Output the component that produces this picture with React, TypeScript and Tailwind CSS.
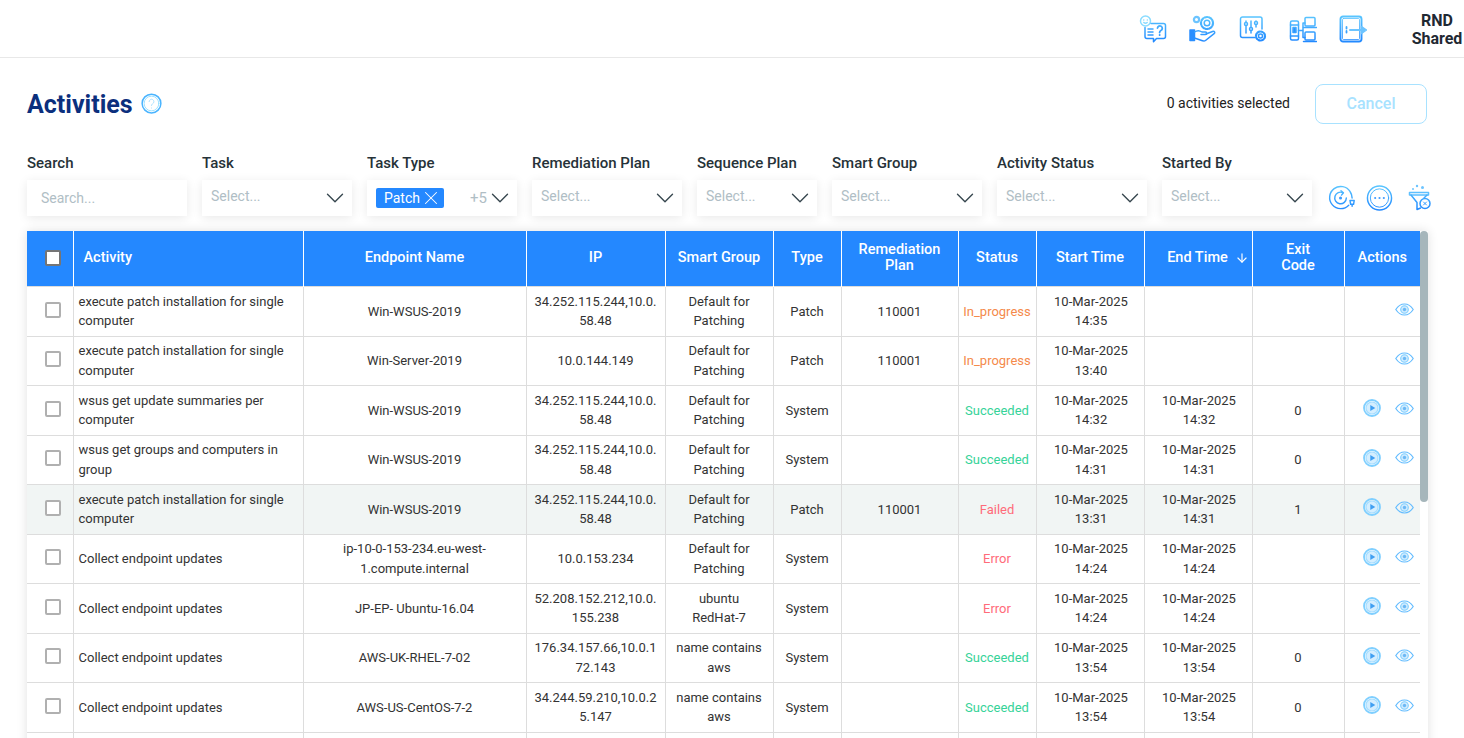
import { ArrowDown, ChevronDown, X } from "lucide-react";
import type { ReactNode } from "react";

const filters = [
  { label: "Task", width: "w-[150px]" },
  { label: "Task Type", width: "w-[150px]", tag: "Patch" },
  { label: "Remediation Plan", width: "w-[150px]" },
  { label: "Sequence Plan", width: "w-[120px]" },
  { label: "Smart Group", width: "w-[150px]" },
  { label: "Activity Status", width: "w-[150px]" },
  { label: "Started By", width: "w-[150px]" },
];

const columns = [
  { label: "", width: "w-[46px]" },
  { label: "Activity", width: "w-[230px]" },
  { label: "Endpoint Name", width: "w-[223px]" },
  { label: "IP", width: "w-[139px]" },
  { label: "Smart Group", width: "w-[108px]" },
  { label: "Type", width: "w-[68px]" },
  { label: "Remediation\nPlan", width: "w-[117px]" },
  { label: "Status", width: "w-[78px]" },
  { label: "Start Time", width: "w-[108px]" },
  { label: "End Time", width: "w-[108px]" },
  { label: "Exit\nCode", width: "w-[92px]" },
  { label: "Actions", width: "w-[76px]" },
];

const patchName = "execute patch installation for single computer";
const collect = "Collect endpoint updates";
const wsusIp = "34.252.115.244,10.0.58.48";
const patching = "Default for Patching";

const rows = [
  { activity: patchName, endpoint: "Win-WSUS-2019", ip: wsusIp, group: patching, type: "Patch", plan: "110001", status: "In_progress", start: ["10-Mar-2025", "14:35"], end: [], code: "" },
  { activity: patchName, endpoint: "Win-Server-2019", ip: "10.0.144.149", group: patching, type: "Patch", plan: "110001", status: "In_progress", start: ["10-Mar-2025", "13:40"], end: [], code: "" },
  { activity: "wsus get update summaries per computer", endpoint: "Win-WSUS-2019", ip: wsusIp, group: patching, type: "System", plan: "", status: "Succeeded", start: ["10-Mar-2025", "14:32"], end: ["10-Mar-2025", "14:32"], code: "0" },
  { activity: "wsus get groups and computers in group", endpoint: "Win-WSUS-2019", ip: wsusIp, group: patching, type: "System", plan: "", status: "Succeeded", start: ["10-Mar-2025", "14:31"], end: ["10-Mar-2025", "14:31"], code: "0" },
  { activity: patchName, endpoint: "Win-WSUS-2019", ip: wsusIp, group: patching, type: "Patch", plan: "110001", status: "Failed", start: ["10-Mar-2025", "13:31"], end: ["10-Mar-2025", "14:31"], code: "1", hover: true },
  { activity: collect, endpoint: "ip-10-0-153-234.eu-west-1.compute.internal", ip: "10.0.153.234", group: patching, type: "System", plan: "", status: "Error", start: ["10-Mar-2025", "14:24"], end: ["10-Mar-2025", "14:24"], code: "" },
  { activity: collect, endpoint: "JP-EP- Ubuntu-16.04", ip: "52.208.152.212,10.0.155.238", group: "ubuntu RedHat-7", type: "System", plan: "", status: "Error", start: ["10-Mar-2025", "14:24"], end: ["10-Mar-2025", "14:24"], code: "" },
  { activity: collect, endpoint: "AWS-UK-RHEL-7-02", ip: "176.34.157.66,10.0.172.143", group: "name contains aws", type: "System", plan: "", status: "Succeeded", start: ["10-Mar-2025", "13:54"], end: ["10-Mar-2025", "13:54"], code: "0" },
  { activity: collect, endpoint: "AWS-US-CentOS-7-2", ip: "34.244.59.210,10.0.25.147", group: "name contains aws", type: "System", plan: "", status: "Succeeded", start: ["10-Mar-2025", "13:54"], end: ["10-Mar-2025", "13:54"], code: "0" },
];

const statusColors: Record<string, string> = {
  In_progress: "text-[#f58a4b]",
  Succeeded: "text-[#36d399]",
  Failed: "text-[#ff6b7a]",
  Error: "text-[#ff6b7a]",
};

function Icon({ size, children }: { size: number; children: ReactNode }) {
  return (
    <svg
      width={size}
      height={size}
      viewBox="0 0 28 28"
      fill="none"
      stroke="url(#iconBlue)"
      strokeWidth="1.5"
      strokeLinecap="round"
      strokeLinejoin="round"
    >
      {children}
    </svg>
  );
}

function ChatIcon() {
  return (
    <Icon size={28}>
      <circle cx="6.5" cy="6" r="5" stroke="#8adcff" />
      <path d="M4.7 5h.1M8.3 5h.1M4.8 7.500c1 .8 2.400 .8 3.400 0" stroke="#8adcff" />
      <path d="M12 8.500h12.500a2 2 0 0 1 2 2v11a2 2 0 0 1-2 2h-7l-3 3.200v-3.200H8a2 2 0 0 1-2-2v-9" />
      <path d="M9 14h5M9 17h5M9 20h5" />
      <path d="M18.500 13a2.400 2.400 0 1 1 3.400 2.500c-.9 .5-1.300 1-1.300 2M20.600 20h.1" strokeWidth="1.800" />
    </Icon>
  );
}

function HandGearIcon() {
  return (
    <Icon size={28}>
      <circle cx="7.500" cy="4.500" r="2.600" stroke="#6cc4ff" strokeWidth="2.200" />
      <circle cx="18" cy="8" r="2.800" />
      <circle cx="18" cy="8" r="6" strokeDasharray="2.600 1.600" strokeWidth="2.200" />
      <path d="M1 15h4.500v10.500H1z" fill="#2a8fff" stroke="#2a8fff" />
      <path d="M5.500 17c2.500-1.800 5-1.800 7.500 0h3.500c1.600 0 1.600 2.500 0 2.500H12" />
      <path d="M17 19l6.500-2.500c2-.6 3 1 1.600 2.200L16.500 25.500c-1 .7-2 .7-3 .2L5.500 23" />
    </Icon>
  );
}

function SlidersIcon() {
  return (
    <Icon size={28}>
      <path d="M16 22.500H3.500a2 2 0 0 1-2-2V4a2 2 0 0 1 2-2h17.500a2 2 0 0 1 2 2v10" />
      <path d="M7 6v12M12 6v12M17 6v6" />
      <circle cx="7" cy="9" r="1.500" fill="#fff" />
      <circle cx="12" cy="14" r="1.500" fill="#fff" />
      <circle cx="17" cy="8" r="1.500" fill="#fff" />
      <circle cx="21.500" cy="21" r="2" />
      <circle cx="21.500" cy="21" r="4.500" strokeDasharray="2 1.500" strokeWidth="2.200" />
    </Icon>
  );
}

function DevicesIcon() {
  return (
    <Icon size={28}>
      <rect x="1.500" y="6" width="8" height="19" rx="1.500" />
      <path d="M1.500 10h8M1.500 21h8" />
      <rect x="4" y="12.500" width="3" height="5" fill="#2a8fff" />
      <path d="M9.500 15.500h4.500M14 8v14.500M14 8h2M14 22.500h2" />
      <rect x="16" y="2.500" width="10" height="8.500" rx="1" />
      <path d="M14.500 12.500h13" />
      <rect x="16" y="17" width="10" height="8" rx="1" />
      <path d="M14.500 26.500h13" />
    </Icon>
  );
}

function DoorIcon() {
  return (
    <Icon size={28}>
      <rect x="1.500" y="1.500" width="21" height="25" rx="2.500" strokeWidth="1.900" />
      <rect x="3.500" y="3.500" width="17" height="21" rx="1" strokeWidth="0.800" />
      <path d="M7.500 12v1.500M7.500 16v1.500" strokeWidth="1.800" />
      <path d="M11 15h12" stroke="#6cc4ff" strokeWidth="2" />
      <path d="M22.500 11.500L27.500 15l-5 3.500z" fill="#6cc4ff" stroke="#6cc4ff" />
    </Icon>
  );
}

function RefreshIcon() {
  return (
    <Icon size={28}>
      <path d="M21.500 21.500A11.500 11.500 0 1 1 23 7.500 12 12 0 0 1 25 14" />
      <path d="M19 14a6 6 0 1 1-3.500-5.500" />
      <path d="M13.500 6.500l2.500 2-2 2.500" />
      <circle cx="13" cy="14" r="1.600" fill="#3b9bff" stroke="none" />
      <path d="M22.800 16.500h4.400l-.7 4h-3zM25 20.500v2" />
    </Icon>
  );
}

function DotsIcon() {
  return (
    <Icon size={28}>
      <circle cx="14" cy="14" r="12.500" />
      <circle cx="14" cy="14" r="9.500" strokeWidth="1" />
      <circle cx="9.500" cy="14" r="1.100" fill="#3b9bff" stroke="none" />
      <circle cx="14" cy="14" r="1.100" fill="#3b9bff" stroke="none" />
      <circle cx="18.500" cy="14" r="1.100" fill="#3b9bff" stroke="none" />
    </Icon>
  );
}

function FunnelIcon() {
  return (
    <Icon size={28}>
      <circle cx="11" cy="2" r="1.200" fill="#6cc4ff" stroke="none" />
      <circle cx="16.500" cy="3.500" r="1.500" fill="#6cc4ff" stroke="none" />
      <circle cx="7" cy="5" r="1" fill="#6cc4ff" stroke="none" />
      <path d="M3.500 8.500h19v2.500h-19z" stroke="#5ec0ff" />
      <path d="M5 11l6 7.500v7l3.500-1.500" />
      <path d="M21 11l-3 3" />
      <circle cx="19" cy="19.500" r="5" />
      <path d="M17.500 18l3 3M20.500 18l-3 3" strokeWidth="1" />
    </Icon>
  );
}

function HelpIcon() {
  return (
    <Icon size={21}>
      <circle cx="14" cy="14" r="12.500" stroke="#4ab4ff" strokeWidth="2" />
      <circle cx="14" cy="14" r="9.800" stroke="#8adcff" strokeWidth="1.100" />
      <path d="M10.800 11.500a3.200 3.200 0 1 1 4.800 2.800c-1 .6-1.600 1.200-1.600 2.400M14 20h.1" stroke="#a8e0ff" strokeWidth="1.300" />
    </Icon>
  );
}

function PlayIcon() {
  return (
    <svg width="18" height="18" viewBox="0 0 18 18" fill="none">
      <circle cx="9" cy="9" r="8" stroke="#7fcfff" strokeWidth="1.800" />
      <circle cx="9" cy="9" r="6" stroke="#a5ddff" strokeWidth="1.200" fill="#d4eeff" />
      <path d="M7.300 6.100L12.300 9l-5 2.900z" fill="#3f9ff2" />
    </svg>
  );
}

function EyeIcon() {
  return (
    <svg width="19" height="13" viewBox="0 0 19 13" fill="none">
      <path d="M.8 6.500C3 3 6 1 9.500 1s6.500 2 8.700 5.500C16 10 13 12 9.500 12S3 10 .8 6.500z" stroke="#63bcff" strokeWidth="1.200" />
      <circle cx="9.500" cy="6.500" r="3.800" stroke="#7fcfff" strokeWidth="1.100" fill="#cdeaff" />
      <circle cx="9.500" cy="6.500" r="1.700" fill="#6db9f5" />
    </svg>
  );
}

function Filter({ label, width, tag }: { label: string; width: string; tag?: string }) {
  return (
    <div className={`${width} shrink-0`}>
      <div className="text-[15px] leading-[20px] font-medium text-[#263238] mb-[7px]">{label}</div>
      <div className="h-[36px] bg-white shadow-[0_2px_10px_rgba(0,0,0,0.09)] flex items-center pl-[9px] pr-[8px]">
        {tag ? (
          <>
            <span className="h-[20px] bg-[#2488ff] rounded-[2px] text-white text-[14px] leading-[20px] pl-[8px] pr-[2px] flex items-center">
              {tag}
              <X size={22} strokeWidth={1.1} />
            </span>
            <span className="ml-auto text-[15px] text-[#b0bec5]">+5</span>
          </>
        ) : (
          <span className="text-[14px] text-[#b0bec5] -mt-[4px]">Select...</span>
        )}
        <ChevronDown
          size={30}
          strokeWidth={1.1}
          className={`text-[#37474f] shrink-0 -mr-[6px] ${tag ? "-ml-[2px]" : "ml-auto"}`}
        />
      </div>
    </div>
  );
}

function Checkbox({ header }: { header?: boolean }) {
  return (
    <span
      className={
        header
          ? "block w-[16px] h-[16px] ml-[18px] bg-white border-[2px] border-[#757575] rounded-[2px]"
          : "block w-[16px] h-[16px] ml-[18px] -mt-[3px] bg-white border-[2px] border-[#b0b0b0] rounded-[2px]"
      }
    />
  );
}

export default function App() {
  return (
    <div className="h-[738px] overflow-hidden bg-white font-['Roboto',sans-serif] text-[#333]">
      <svg className="absolute w-0 h-0">
        <defs>
          <linearGradient id="iconBlue" gradientUnits="userSpaceOnUse" x1="0" y1="0" x2="0" y2="28">
            <stop offset="0" stopColor="#5cc8ff" />
            <stop offset="1" stopColor="#1f86ff" />
          </linearGradient>
        </defs>
      </svg>

      <header className="h-[58px] border-b border-[#e8e8e8] flex items-center justify-end">
        <div className="flex items-center gap-[22px] mr-[69px]">
          <ChatIcon />
          <HandGearIcon />
          <SlidersIcon />
          <DevicesIcon />
          <DoorIcon />
        </div>
        <div className="w-[2px] text-[16px] leading-[18px] font-bold text-center text-[#1f2933] flex flex-col items-center mr-[26px] mt-[2px] whitespace-nowrap">
          <span>RND</span>
          <span>Shared</span>
        </div>
      </header>

      <div className="pl-[27px] pr-[37px]">
        <div className="flex items-center h-[40px] mt-[26px]">
          <h1 className="text-[25px] leading-[32px] font-bold text-[#0b2f7d] mt-[1px]">Activities</h1>
          <span className="ml-[8px] flex -mt-[1px]">
            <HelpIcon />
          </span>
          <span className="ml-auto text-[14px] text-[#222] -mt-[2px]">0 activities selected</span>
          <button className="ml-[25px] w-[112px] h-[40px] border border-[#a8e2ff] rounded-[8px] text-[16px] font-medium text-[#a8e2ff]">
            Cancel
          </button>
        </div>

        <div className="flex items-end mt-[29px]">
          <div className="w-[160px] shrink-0 mr-[15px]">
            <div className="text-[15px] leading-[20px] font-medium text-[#263238] mb-[7px]">Search</div>
            <div className="h-[36px] bg-white shadow-[0_2px_10px_rgba(0,0,0,0.09)] flex items-center pl-[14px] text-[14px] text-[#b0bec5]">
              Search...
            </div>
          </div>
          <div className="flex gap-[15px]">
            {filters.map((f) => (
              <Filter key={f.label} label={f.label} width={f.width} tag={f.tag} />
            ))}
          </div>
          <div className="flex items-center gap-[11px] ml-[16px] mb-[4px] w-[106px]">
            <RefreshIcon />
            <DotsIcon />
            <span className="ml-[2px] flex">
              <FunnelIcon />
            </span>
          </div>
        </div>

        <div className="flex mt-[15px] w-[1401px] shadow-[0_0_10px_rgba(0,0,0,0.12)]">
          <table className="w-[1393px] table-fixed border-collapse text-[13px] leading-[19.5px]">
            <thead>
              <tr className="h-[55.5px] bg-[#2488ff] text-white">
                {columns.map((c, i) => (
                  <th
                    key={i}
                    className={`${c.width} border-x border-white first:border-l-0 last:border-r-0 pb-[1px] text-[14.5px] leading-[16px] font-medium whitespace-pre-line ${
                      c.label === "Activity" ? "text-left pl-[10px]" : "text-center"
                    }`}
                  >
                    {i === 0 ? (
                      <Checkbox header />
                    ) : c.label === "End Time" ? (
                      <span className="inline-flex items-center gap-[7px] ml-[20px]">
                        {c.label}
                        <ArrowDown size={14} strokeWidth={2} />
                      </span>
                    ) : (
                      c.label
                    )}
                  </th>
                ))}
              </tr>
            </thead>
            <tbody>
              {rows.map((r, i) => (
                <tr key={i} className={`h-[49.5px] ${r.hover ? "bg-[#f1f5f4]" : ""}`}>
                  <td className="border border-[#ddd] border-l-0">
                    <Checkbox />
                  </td>
                  <td className="border border-[#ddd] pl-[5px] pr-[8px]">{r.activity}</td>
                  <td className="border border-[#ddd] text-center px-[8px]">{r.endpoint}</td>
                  <td className="border border-[#ddd] text-center px-[7px] break-all">{r.ip}</td>
                  <td className="border border-[#ddd] text-center px-[10px]">{r.group}</td>
                  <td className="border border-[#ddd] text-center">{r.type}</td>
                  <td className="border border-[#ddd] text-center">{r.plan}</td>
                  <td className={`border border-[#ddd] text-center ${statusColors[r.status]}`}>{r.status}</td>
                  <td className="border border-[#ddd] text-center pl-[2px]">
                    {r.start[0]}
                    <br />
                    {r.start[1]}
                  </td>
                  <td className="border border-[#ddd] text-center pl-[2px]">
                    {r.end[0]}
                    {r.end.length > 0 && <br />}
                    {r.end[1]}
                  </td>
                  <td className="border border-[#ddd] text-center">{r.code}</td>
                  <td className="border border-[#ddd] border-r-0">
                    <div className="flex items-center justify-end gap-[14px] pr-[6px] -mt-[4px]">
                      {r.end.length > 0 && <PlayIcon />}
                      <EyeIcon />
                    </div>
                  </td>
                </tr>
              ))}
              <tr className="h-[49.5px]">
                {columns.map((c, i) => (
                  <td key={i} className="border border-[#ddd] first:border-l-0 last:border-r-0" />
                ))}
              </tr>
            </tbody>
          </table>
          <div className="w-[8px] shrink-0 bg-white">
            <div className="h-[271px] bg-[#a6b6bb] rounded-[4px]" />
          </div>
        </div>
      </div>
    </div>
  );
}
